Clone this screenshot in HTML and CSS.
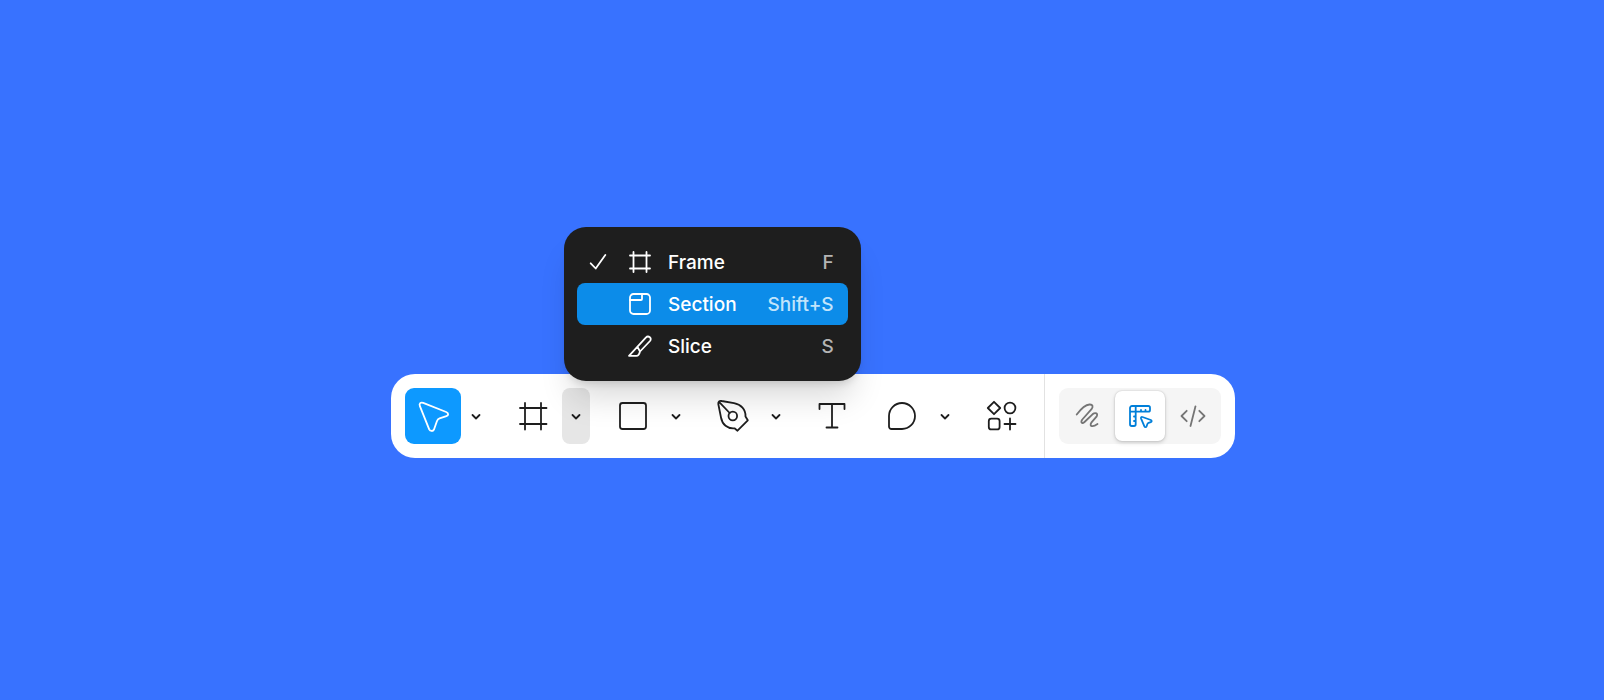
FILE: index.html
```html
<!DOCTYPE html>
<html lang="en">
<head>
    <meta charset="UTF-8">
    <meta name="viewport" content="width=device-width, initial-scale=1.0">
    <title>Toolbar</title>
    <link rel="stylesheet" href="styles.css">
</head>
<body>
    <div class="toolbar" role="toolbar" aria-label="Tools">
        <div class="tools">
            <div class="tool-group">
                <button type="button" class="tool active" aria-label="Move">
                    <svg class="icon" viewBox="0 0 36 36"><path d="M4.9 8.2C3.8 5.4 5.7 4 8.2 4.9L31.2 14C33.8 15.1 33.7 17.3 31.4 18.1L24.6 20.4Q22.6 21.1 21.9 23.2L19 31.5C18 33.5 15.2 33.5 14.2 31.3Z"/></svg>
                </button>
                <button type="button" class="caret" aria-label="Move options">
                    <svg class="chevron" viewBox="0 0 12 12"><path d="M2.5 5l3.5 3.5L9.500 5"/></svg>
                </button>
            </div>

            <div class="tool-group">
                <button type="button" class="tool" aria-label="Frame">
                    <svg class="icon" viewBox="0 0 36 36"><path d="M10 5v26.5M26 5v26.5M5 10h26.5M5 26h26.5"/></svg>
                </button>
                <div class="dropdown">
                    <button type="button" class="caret open" aria-label="Frame options" aria-expanded="true">
                        <svg class="chevron" viewBox="0 0 12 12"><path d="M2.5 5l3.5 3.5L9.500 5"/></svg>
                    </button>
                    <!-- Frame menu -->
                    <div class="menu" role="menu">
                        <button type="button" class="menu-item" role="menuitem">
                            <svg class="menu-icon check" viewBox="0 0 24 24"><path d="M4.7 13.3l5 5.2L19.3 5"/></svg>
                            <svg class="menu-icon" viewBox="0 0 24 24"><path d="M5.5 2v20M18.5 2v20M2 5.5h20M2 18.5h20"/></svg>
                            <span class="menu-label">Frame</span>
                            <span class="shortcut">F</span>
                        </button>
                        <button type="button" class="menu-item selected" role="menuitem">
                            <span class="menu-icon check"></span>
                            <svg class="menu-icon" viewBox="0 0 24 24"><rect x="2" y="2" width="20" height="20" rx="3.5"/><path d="M2 8h11q1 0 1-1V2"/></svg>
                            <span class="menu-label">Section</span>
                            <span class="shortcut">Shift+S</span>
                        </button>
                        <button type="button" class="menu-item" role="menuitem">
                            <span class="menu-icon check"></span>
                            <svg class="menu-icon" viewBox="0 0 24 24"><path d="M1 21.8L17.8 3.6C20.5 1 24.4 4.3 22 7L12 17.5C11.4 20 10.2 21.8 8.5 21.8ZM9.5 12.8l2.5 4.7"/></svg>
                            <span class="menu-label">Slice</span>
                            <span class="shortcut">S</span>
                        </button>
                    </div>
                </div>
            </div>

            <div class="tool-group">
                <button type="button" class="tool" aria-label="Rectangle">
                    <svg class="icon" viewBox="0 0 36 36"><rect x="5" y="5" width="26" height="26" rx="2.5"/></svg>
                </button>
                <button type="button" class="caret" aria-label="Shape options">
                    <svg class="chevron" viewBox="0 0 12 12"><path d="M2.5 5l3.5 3.5L9.500 5"/></svg>
                </button>
            </div>

            <div class="tool-group">
                <button type="button" class="tool" aria-label="Pen">
                    <svg class="icon" viewBox="0 0 36 36"><path d="M3.3 6C3 3.7 4.5 2.5 6.7 3L19 5.2C26 6.5 30.8 11.5 30.5 18.5L32.8 22.3 22.5 32.7 19.5 30.3C12.5 31 7.2 26.5 6 19.5ZM4.5 4.3L14.7 15"/><circle cx="17.8" cy="18" r="4.3"/></svg>
                </button>
                <button type="button" class="caret" aria-label="Pen options">
                    <svg class="chevron" viewBox="0 0 12 12"><path d="M2.5 5l3.5 3.5L9.500 5"/></svg>
                </button>
            </div>

            <button type="button" class="tool narrow" aria-label="Text">
                <svg class="icon" viewBox="0 0 36 36"><path d="M5.5 11V6h25v5M18 6v23.5M12.5 29.5h11"/></svg>
            </button>

            <div class="tool-group">
                <button type="button" class="tool" aria-label="Comment">
                    <svg class="icon" viewBox="0 0 36 36"><path d="M18 5a13 13 0 0 1 0 26H7.5A2.5 2.5 0 0 1 5 28.5V18A13 13 0 0 1 18 5Z"/></svg>
                </button>
                <button type="button" class="caret" aria-label="Comment options">
                    <svg class="chevron" viewBox="0 0 12 12"><path d="M2.5 5l3.5 3.5L9.500 5"/></svg>
                </button>
            </div>

            <button type="button" class="tool" aria-label="Actions">
                <svg class="icon" viewBox="0 0 36 36"><path d="M10 3.8L16.2 10 10 16.2 3.8 10ZM26 20.5v11M20.5 26h11"/><circle cx="26" cy="10" r="5.4"/><rect x="4.8" y="20.6" width="10.8" height="10.8" rx="2.5"/></svg>
            </button>
        </div>

        <!-- Mode switch -->
        <div class="modes">
            <div class="mode-switch">
                <button type="button" class="mode" aria-label="Draw">
                    <svg class="icon" viewBox="0 0 36 36"><path d="M7.7 16.5C11.5 11.5 16.5 6.8 20.5 6.5C24 6.300 24.300 8.800 22.500 11.200L13.300 21.500C11.300 24.500 13 26.300 15.500 24L23.500 16.300C26.500 13.800 29.500 15.500 27.500 18.700L22.300 24.700C20 28.500 23.800 29.300 28.500 26"/></svg>
                </button>
                <button type="button" class="mode current" aria-label="Design" aria-pressed="true">
                    <svg class="icon" viewBox="0 0 36 36"><path d="M10 8H26.3a1.7 1.7 0 0 1 1.7 1.7V12a1.7 1.7 0 0 1-1.7 1.7H13.7V26.3A1.7 1.7 0 0 1 12 28H9.7A1.7 1.7 0 0 1 8 26.3V10A2 2 0 0 1 10 8ZM13.7 8v5.700M8 13.700h5.700M19 13.500v-1.500M23.500 13.500v-1.500M13.500 18.500h-1.500M13.500 23h-1.500"/><path d="M19 20.3C18.7 19.2 19.5 18.6 20.5 19L28.8 22C30 22.6 29.9 23.7 28.8 24.1L26.5 24.9Q25.7 25.2 25.4 26L24.6 28.3C24.1 29.5 22.9 29.5 22.4 28.3Z"/></svg>
                </button>
                <button type="button" class="mode" aria-label="Dev Mode">
                    <svg class="icon" viewBox="0 0 36 36"><path d="M11.7 12.8L6.5 18l5.2 5.2M24.3 12.8L29.5 18l-5.2 5.2M20.5 8.3l-5 19.7"/></svg>
                </button>
            </div>
        </div>
    </div>
</body>
</html>
```
FILE: styles.css
```css
* {
    box-sizing: border-box;
}
body {
    margin: 0;
    padding: 132px 0 0 22px;
    min-height: 100vh;
    display: flex;
    justify-content: center;
    align-items: center;
    background-color: #3872ff;
    font-family: Inter, sans-serif;
}
button {
    display: flex;
    justify-content: center;
    align-items: center;
    padding: 0;
    border: none;
    background: none;
    color: #1e1e1e;
    font: inherit;
    cursor: pointer;
}
svg {
    display: block;
    fill: none;
    stroke: currentColor;
    stroke-width: 1.8;
    stroke-linecap: round;
    stroke-linejoin: round;
}
.toolbar {
    display: flex;
    background-color: #ffffff;
    border-radius: 24px;
}
.tools {
    display: flex;
    gap: 15px;
    padding: 14px;
}
.tool-group {
    display: flex;
    gap: 1px;
}
.tool {
    width: 56px;
    height: 56px;
    border-radius: 9px;
}
.tool.narrow {
    width: 54px;
}
.tool.active {
    background-color: #0d99ff;
    color: #ffffff;
}
.icon {
    width: 36px;
    height: 36px;
}
.caret {
    width: 28px;
    height: 56px;
    border-radius: 8px;
}
.caret.open {
    background-color: #e6e6e6;
}
.chevron {
    width: 12px;
    height: 12px;
}
.dropdown {
    position: relative;
}

/* Menu */
.menu {
    position: absolute;
    left: 2px;
    bottom: calc(100% + 7px);
    padding: 14px 13px;
    border-radius: 22px;
    background-color: #1e1e1e;
    box-shadow: 0 24px 32px -8px rgba(0, 0, 0, 0.15), 0 6px 8px -4px rgba(0, 0, 0, 0.15);
}
.menu-item {
    width: 100%;
    height: 42px;
    justify-content: flex-start;
    padding: 0 14px 0 9px;
    border-radius: 8px;
    color: #ffffff;
    font-size: 19px;
    font-weight: 500;
    white-space: nowrap;
}
.menu-item.selected {
    background-color: #0c8ce9;
}
.menu-icon {
    flex: none;
    width: 24px;
    height: 24px;
    margin-right: 16px;
}
.menu-icon.check {
    margin-right: 18px;
}
.shortcut {
    margin-left: auto;
    padding-left: 31px;
    color: #b4b4b4;
}
.selected .shortcut {
    color: #c2e4fb;
}

/* Modes */
.modes {
    padding: 14px;
    border-left: 1px solid #e2e2e2;
}
.mode-switch {
    display: flex;
    gap: 3px;
    padding: 3px;
    border-radius: 9px;
    background-color: #f5f5f5;
}
.mode {
    width: 50px;
    height: 50px;
    border-radius: 7px;
    color: #757575;
}
.mode.current {
    background-color: #ffffff;
    color: #007fd9;
    box-shadow: 0 0 2px rgba(0, 0, 0, 0.2), 0 2px 4px rgba(0, 0, 0, 0.15);
}
```
